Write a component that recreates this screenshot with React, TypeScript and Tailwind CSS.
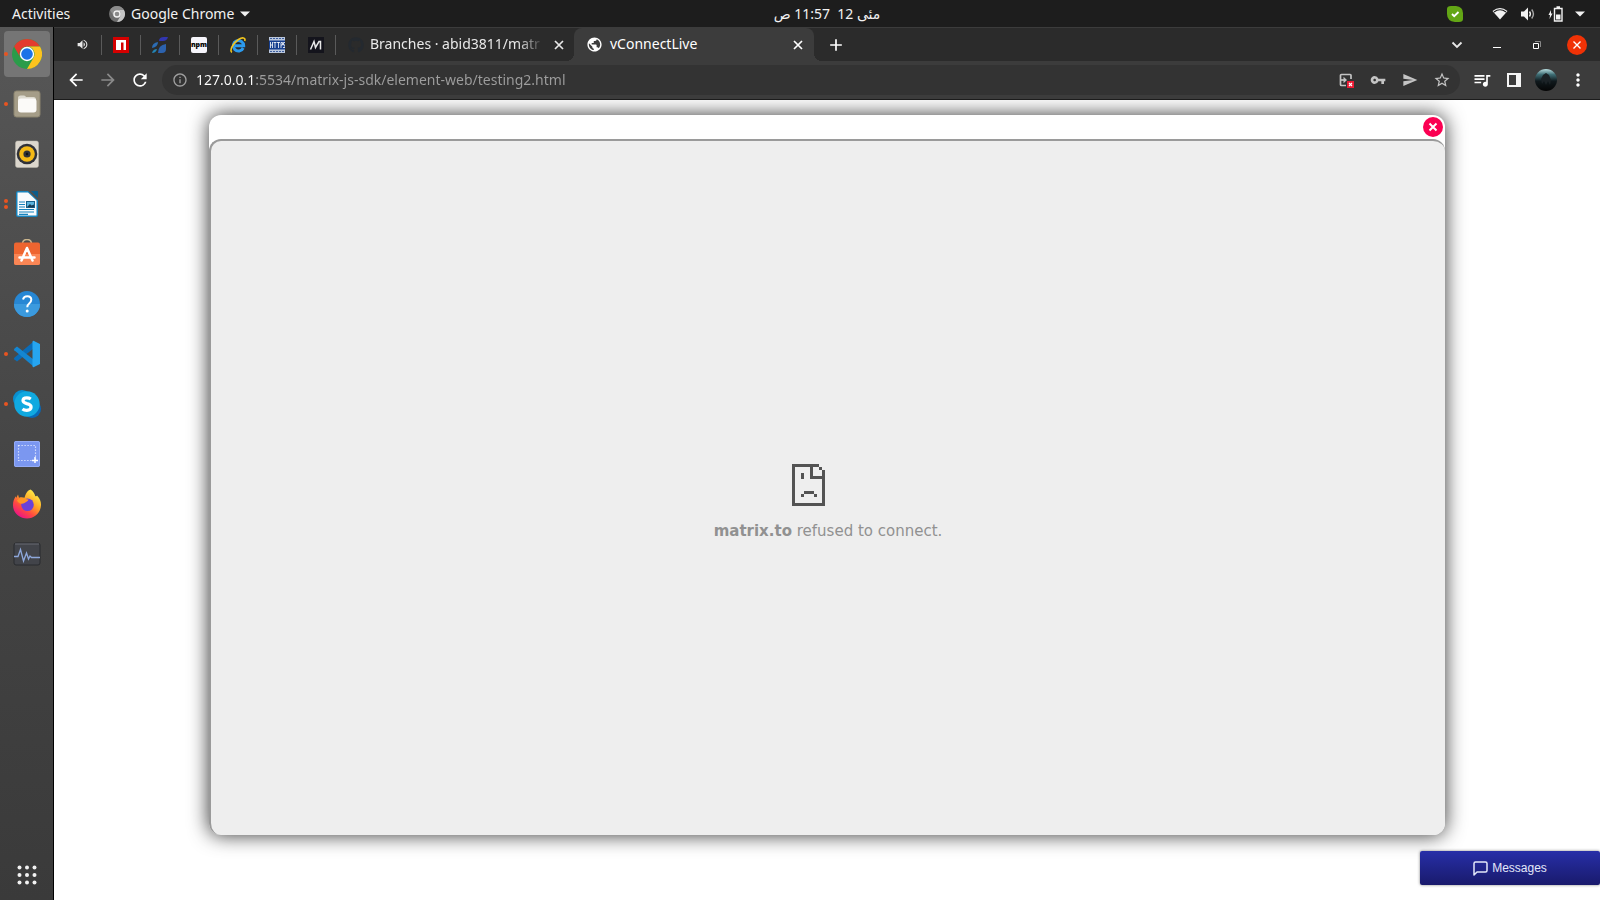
import React from 'react';
import {
  MdArrowBack,
  MdArrowForward,
  MdRefresh,
  MdInfoOutline,
  MdVpnKey,
  MdSend,
  MdStarBorder,
  MdQueueMusic,
  MdMoreVert,
  MdVolumeUp,
  MdPublic,
  MdAdd,
} from 'react-icons/md';
import { FaGithub } from 'react-icons/fa';

interface DockItem {
  name: string;
  dots: number;
  active?: boolean;
  icon: React.ReactNode;
}

const ChromeIcon: React.FC<{ size: number; mono?: boolean }> = ({ size, mono }) => {
  const [red, yellow, green, ring, core] = mono
    ? ['#8c8c8c', '#c4c4c4', '#6e6e6e', '#f2f2f2', '#8a8a8a']
    : ['#e33b2e', '#fcc31e', '#2a9c4a', '#ffffff', '#1a73e8'];
  return (
    <svg width={size} height={size} viewBox="0 0 48 48">
      <circle cx="24" cy="24" r="24" fill={green} />
      <path d="M24 0A24 24 0 0 1 44.8 12H24A12 12 0 0 0 13.6 30L3.2 12A24 24 0 0 1 24 0z" fill={red} />
      <path d="M44.8 12A24 24 0 0 1 24 48L34.4 30A12 12 0 0 0 24 12z" fill={yellow} />
      <circle cx="24" cy="24" r="11.5" fill={ring} />
      <circle cx="24" cy="24" r={mono ? 7 : 9.3} fill={core} />
    </svg>
  );
};

const FilesIcon = () => (
  <svg width="28" height="28" viewBox="0 0 28 28">
    <rect x="1" y="1" width="26" height="26" rx="2.5" fill="#a59d88" stroke="#8b846f" />
    <path d="M5 8q0-2.500 2.500-2.500h3.500q1.500 0 2 1.500h7.500q2.500 0 2.500 2.500v9q0 3-3 3H8q-3 0-3-3z" fill="#dedbd0" />
    <rect x="5" y="8.500" width="18.500" height="14" rx="3" fill="#fbfaf8" />
  </svg>
);

const RhythmboxIcon = () => (
  <svg width="28" height="28" viewBox="0 0 28 28">
    <rect x="2.500" y="1" width="23" height="26.500" rx="2" fill="#dcd7cd" stroke="#bdb8ad" strokeWidth=".5" />
    <circle cx="14" cy="14" r="10.300" fill="#2f3138" />
    <circle cx="14" cy="14" r="7.800" fill="#f4b916" />
    <circle cx="14" cy="14" r="3.600" fill="#2f3138" />
    <circle cx="14" cy="14" r="1.200" fill="#111" />
  </svg>
);

const WriterIcon = () => (
  <svg width="28" height="28" viewBox="0 0 28 28">
    <path d="M3 3q0-2 2-2h10l10 9.500V25q0 2-2 2H5q-2 0-2-2z" fill="#1683bd" />
    <path d="M18 1h7v7z" fill="#0c5d8b" />
    <path d="M4.500 2.500H15l8.500 8V25.500h-19z" fill="#f8fbfd" />
    <path d="M6 12h6M6 14.500h6M6 17h6M6 19.500h15M6 22h15M6 24.300h9" stroke="#1683bd" strokeWidth="1.200" />
    <rect x="13.500" y="11.500" width="8" height="6" fill="#5bb3dd" stroke="#17618a" />
    <path d="M14 17l3-3 1.500 1.500 2.500-1v3z" fill="#183b52" />
  </svg>
);

const SoftwareIcon = () => (
  <svg width="28" height="30" viewBox="0 1 28 30">
    <path d="M9.500 6q0-4.500 4.500-4.500T18.500 6" fill="none" stroke="#cbb58d" strokeWidth="1.500" />
    <rect x="1" y="4.500" width="26" height="22.500" rx="2" fill="#ee6530" />
    <path d="M1 16h26v9q0 2-2 2H3q-2 0-2-2z" fill="#fa8655" />
    <path d="M8.500 22.500L14 10l5.500 12.500M6.500 19.500h15" fill="none" stroke="#fff" strokeWidth="2.500" strokeLinecap="round" strokeLinejoin="round" />
  </svg>
);

const HelpIcon = () => (
  <svg width="28" height="28" viewBox="0 0 28 28">
    <circle cx="14" cy="14" r="13" fill="#2787d4" />
    <path d="M1 14h26A13 13 0 0 1 1 14z" fill="#3b9ade" />
    <path d="M10 9.500q.8-3.200 4.300-3.200 4 0 4 3.500 0 2-2.100 3.700-1.900 1.500-1.900 3.700" fill="none" stroke="#fff" strokeWidth="2" />
    <circle cx="14.200" cy="21" r="1.500" fill="#fff" />
  </svg>
);

const CodeIcon = () => (
  <svg width="28" height="28" viewBox="0 0 28 28">
    <path d="M20.500 1.500v7L4 21.500 1.300 19.200q-.6-.7 0-1.400z" fill="#0a6cb8" />
    <path d="M20.500 26.500v-7L4 6.500 1.300 8.800q-.6.700 0 1.400z" fill="#1486d2" />
    <path d="M20.500.8L27 4v20l-6.500 3.200q-1 0-1-1.200V2q0-1.200 1-1.200z" fill="#26a5f0" />
  </svg>
);

const SkypeIcon = () => (
  <svg width="30" height="30" viewBox="0 0 30 30">
    <circle cx="10" cy="10" r="9" fill="#0a8fd0" />
    <circle cx="20" cy="20" r="9" fill="#0869b8" />
    <circle cx="15" cy="15" r="12.700" fill="#10a9e0" />
    <path d="M18.800 10q-1.800-1.200-4-1.200-3.800 0-3.800 2.800 0 2 3.800 3 4.300 1 4.300 3.500 0 3.200-4.300 3.200-2.600 0-4.300-1.400" fill="none" stroke="#fff" strokeWidth="3.200" />
  </svg>
);

const ScreenshotIcon = () => (
  <svg width="28" height="28" viewBox="0 0 28 28">
    <rect x="1" y="1" width="26" height="26" rx="2" fill="#7b97f0" />
    <rect x="1.500" y="1.500" width="25" height="25" rx="1.500" fill="none" stroke="#94abf7" />
    <rect x="5.500" y="5.500" width="17" height="15" fill="none" stroke="#e6ecff" strokeWidth="1.200" strokeDasharray="1.200 1.800" />
    <path d="M22 17v6M19 20.500h6" stroke="#fff" strokeWidth="1.500" />
  </svg>
);

const FirefoxIcon = () => (
  <svg width="30" height="31" viewBox="0 0 30 31">
    <defs>
      <linearGradient id="ff" x1="0.850" y1="0.100" x2="0.250" y2="0.950">
        <stop offset="0" stopColor="#fff14a" />
        <stop offset=".4" stopColor="#ffa424" />
        <stop offset=".7" stopColor="#ff4a40" />
        <stop offset="1" stopColor="#ec1585" />
      </linearGradient>
    </defs>
    <path
      d="M18.500.500c2.500 1.500 4.300 4 4.700 6.500 1 .5 1.500.3 1.800-.5 3 3 4.200 6.500 4 9.800C28.500 23.800 22.600 29.500 15 29.500S1 23.600 1 16.300c0-3.800 1-6.500 2.800-9l.4 1.800L6 5.500l1 3.200c2-.6 4-.4 5.500.1C14 4 15.500 1.500 18.500.500z"
      fill="url(#ff)"
    />
    <circle cx="15.500" cy="15.800" r="6.300" fill="#6a42d8" />
    <path d="M5 11.500c2.500-3 6-3.300 8.500-1.500l3 .6c-.5 2-2.500 2.400-4 3.400-2.500 1.500-6.500.5-7.500-2.500z" fill="#ff9626" />
  </svg>
);

const MonitorIcon = () => (
  <svg width="28" height="24" viewBox="0 0 28 24">
    <rect x="1" y="1" width="26" height="22" rx="2" fill="#42444a" stroke="#282a2e" />
    <path d="M2 2h24" stroke="#686b72" />
    <path d="M1 14.500h4l2.500-7 3 11.500 3-8 2 6 1.500-3 1.500 1.500H27" fill="none" stroke="#8ea8dc" strokeWidth="1.300" />
  </svg>
);

const dockItems: DockItem[] = [
  { name: 'Google Chrome', dots: 1, active: true, icon: <ChromeIcon size={30} /> },
  { name: 'Files', dots: 1, icon: <FilesIcon /> },
  { name: 'Rhythmbox', dots: 0, icon: <RhythmboxIcon /> },
  { name: 'LibreOffice Writer', dots: 2, icon: <WriterIcon /> },
  { name: 'Ubuntu Software', dots: 0, icon: <SoftwareIcon /> },
  { name: 'Help', dots: 0, icon: <HelpIcon /> },
  { name: 'Visual Studio Code', dots: 1, icon: <CodeIcon /> },
  { name: 'Skype', dots: 1, icon: <SkypeIcon /> },
  { name: 'Screenshot', dots: 0, icon: <ScreenshotIcon /> },
  { name: 'Firefox', dots: 0, icon: <FirefoxIcon /> },
  { name: 'System Monitor', dots: 0, icon: <MonitorIcon /> },
];

const NpmRedIcon = () => (
  <svg width="16" height="16" viewBox="0 0 16 16">
    <path d="M0 0h16v16H0z" fill="#d50000" />
    <path d="M3 3h10v10h-2.500V5.500H8V13H3z" fill="#fff" />
  </svg>
);

const BladesIcon = () => (
  <svg width="16" height="16" viewBox="0 0 16 16">
    <path d="M7 4q0-4 5-4h4q-1 4-5 4z" fill="#3236b0" />
    <path d="M0 11q0-5 6-6 0 5-6 6z" fill="#2c6cb4" />
    <path d="M0 16q1-4 5-4-1 4-5 4z" fill="#2384b4" />
    <path d="M6 16q0-8 8-9v5q0 4-4 4z" fill="#2c62ae" />
  </svg>
);

const NpmIcon = () => (
  <span className="flex size-4 items-center justify-center rounded-xs bg-[#f6f5fb] text-[7px] leading-none font-black text-black">
    npm
  </span>
);

const ExplorerIcon = () => (
  <svg width="16" height="16" viewBox="0 0 16 16">
    <path d="M13.200 11A5.200 5.200 0 1 1 13.700 8.700H5" fill="none" stroke="#2c9bee" strokeWidth="3" />
    <path d="M2 15.300C-1 14 3 6 8.500 2.500 12 .2 16 .200 14.700 4" fill="none" stroke="#f2c51d" strokeWidth="1.600" />
  </svg>
);

const HttpsIcon = () => (
  <svg width="16" height="16" viewBox="0 0 16 16">
    <path d="M0 0h16v16H0z" fill="#b9c6dc" />
    <path d="M0 3.500h16v9H0z" fill="#173f8f" />
    <path d="M1 1.500h14M1 14.500h14" stroke="#3d5f9f" strokeDasharray="2 1" />
    <path d="M1.500 5v6M3.500 5v6M1.500 8h2M4.500 5.500h3M6 5v6M8 5.500h3M9.500 5v6M12 11V5.500h1.500V8H12M16 5.500h-1.500V8H16v2.500h-2" fill="none" stroke="#fff" strokeWidth=".8" />
  </svg>
);

const MIcon = () => (
  <svg width="16" height="16" viewBox="0 0 16 16">
    <path d="M0 0h16v16H0z" fill="#14141c" />
    <path d="M2.500 12.500L6 4.500l1.500 6 3.500-6 1.500 0v8" fill="none" stroke="#e8e8e8" strokeWidth="1.500" />
  </svg>
);

const pinnedTabs = [
  { name: 'npm', icon: <NpmRedIcon /> },
  { name: 'Blades', icon: <BladesIcon /> },
  { name: 'npm package', icon: <NpmIcon /> },
  { name: 'Explorer', icon: <ExplorerIcon /> },
  { name: 'HTTPS', icon: <HttpsIcon /> },
  { name: 'Medium', icon: <MIcon /> },
];

const Caret = () => (
  <svg width="10" height="6" viewBox="0 0 10 6">
    <path d="M0 .500h10L5 5.500z" fill="#f2f2f2" />
  </svg>
);

const CloseGlyph = () => (
  <svg width="14" height="14" viewBox="0 0 14 14">
    <path d="M3 3l8 8M11 3l-8 8" stroke="currentColor" strokeWidth="1.700" />
  </svg>
);

const TopBar = () => (
  <header className="grid h-[27px] shrink-0 grid-cols-[1fr_auto_1fr] items-center bg-[#1d1d1d] font-['Noto_Sans',sans-serif] text-[14px] leading-5 text-[#f2f2f2]">
    <div className="flex items-center pl-3">
      <button className="w-[97px] text-left">Activities</button>
      <button className="flex items-center gap-1.5">
        <ChromeIcon size={16} mono />
        <span>Google Chrome</span>
        <Caret />
      </button>
    </div>
    <button dir="rtl" className="ml-[54px] font-['Noto_Sans','DejaVu_Sans',sans-serif] whitespace-pre">
      {'مئی 12  11:57 ص'}
    </button>
    <div className="flex items-center justify-end pr-[15px]">
      <svg className="mr-[29px]" width="16" height="16" viewBox="0 0 16 16">
        <path d="M0 3q0-3 4-3h5q7 1 7 7v6q0 3-4 3H8Q0 15 0 8z" fill="#63a615" />
        <path d="M5 8l2.200 2.200L11.500 6" fill="none" stroke="#fff" strokeWidth="1.800" />
      </svg>
      <svg className="mr-3" width="16" height="13" viewBox="0 0 16 13">
        <path d="M.5 4Q8-2 15.500 4L8 12.500z" fill="#f2f2f2" />
        <path d="M2 5Q8 .5 14 5" fill="none" stroke="#1d1d1d" strokeWidth="1.200" />
      </svg>
      <svg className="mr-3" width="16" height="14" viewBox="0 0 16 14">
        <path d="M1 4.500h3L8 .500v13L4 9.500H1z" fill="#f2f2f2" />
        <path d="M9.500 4.500q1.800 2.500 0 5" fill="none" stroke="#f2f2f2" strokeWidth="1.400" />
        <path d="M11.700 2.500q3.500 4.500 0 9" fill="none" stroke="#a8a8a8" strokeWidth="1.400" />
      </svg>
      <svg className="mr-3" width="15" height="16" viewBox="0 0 15 16">
        <path d="M3 4L.500 9H2l-.5 4L4.500 7.500H3z" fill="#f2f2f2" />
        <path d="M6.500 2.500h7.500v12.500H6.500zM8.500 1h3.500" fill="none" stroke="#f2f2f2" strokeWidth="1.400" />
        <path d="M8 8.500h4.500v5H8z" fill="#f2f2f2" />
      </svg>
      <Caret />
    </div>
  </header>
);

const Dock = () => (
  <nav className="flex w-[54px] shrink-0 flex-col gap-1 border-r border-black bg-linear-to-b from-[#575757] via-[#454545] to-[#3a3a3a] px-1 pt-1 pb-0.5">
    {dockItems.map(item => (
      <button
        key={item.name}
        aria-label={item.name}
        className={`relative flex h-[46px] w-[46px] items-center justify-center rounded-sm ${item.active ? 'bg-[#757575]' : ''}`}
      >
        {item.icon}
        <span className="absolute left-0 flex flex-col gap-0.5">
          {Array.from({ length: item.dots }, (_, i) => (
            <span key={i} className="size-1 rounded-full bg-[#e95420]" />
          ))}
        </span>
      </button>
    ))}
    <button aria-label="Show applications" className="mt-auto flex h-[46px] w-[46px] items-center justify-center">
      <svg width="20" height="20" viewBox="0 0 20 20" fill="#f2f2f2">
        {[2.5, 10, 17.5].map(y => [2.5, 10, 17.5].map(x => <circle key={`${x}-${y}`} cx={x} cy={y} r="2" />))}
      </svg>
    </button>
  </nav>
);

const TabStrip = () => (
  <div className="flex h-[34px] shrink-0 items-center border-t border-[#3c3c3c] bg-[#2b2b2b] font-['Noto_Sans',sans-serif] text-[14px] leading-5 text-[#e8e8e8]">
    <button aria-label="Muted tab" className="flex w-[47px] justify-end pr-3">
      <MdVolumeUp size={13} />
    </button>
    {pinnedTabs.map(tab => (
      <button key={tab.name} aria-label={tab.name} className="flex h-5 w-[39px] items-center justify-center border-l border-[#5a5a5a]">
        {tab.icon}
      </button>
    ))}
    <div className="flex h-5 w-[239px] items-center border-l border-[#5a5a5a] pl-3">
      <FaGithub size={16} className="shrink-0 text-[#24292f]" />
      <button className="ml-1.5 flex-1 mask-r-from-85% pb-0.5 text-left whitespace-nowrap">Branches · abid3811/matr</button>
      <button aria-label="Close tab" className="mr-2 ml-2">
        <CloseGlyph />
      </button>
    </div>
    <div className="relative flex h-full w-[240px] items-center rounded-t-lg bg-[#3c3c3c] px-[9px] text-white before:absolute before:bottom-0 before:-left-2 before:size-2 before:bg-[radial-gradient(circle_at_0_0,#2b2b2b_8px,#3c3c3c_8px)] after:absolute after:-right-2 after:bottom-0 after:size-2 after:bg-[radial-gradient(circle_at_100%_0,#2b2b2b_8px,#3c3c3c_8px)]">
      <MdPublic size={17} className="ml-[3px] shrink-0" />
      <button className="ml-[7px] flex-1 pb-0.5 text-left">vConnectLive</button>
      <button aria-label="Close tab">
        <CloseGlyph />
      </button>
    </div>
    <button aria-label="New tab" className="ml-3 text-white">
      <MdAdd size={20} />
    </button>
    <div className="ml-auto flex items-center gap-5 pr-[13px]">
      <button aria-label="Search tabs" className="flex size-5 items-center justify-center">
        <svg width="12" height="8" viewBox="0 0 12 8">
          <path d="M1.500 1.500L6 6l4.500-4.500" fill="none" stroke="#e8e8e8" strokeWidth="1.800" />
        </svg>
      </button>
      <button aria-label="Minimize" className="flex size-5 items-center justify-center">
        <svg width="8" height="8" viewBox="0 0 8 8">
          <path d="M0 6h8v1H0z" fill="#fff" />
        </svg>
      </button>
      <button aria-label="Restore" className="flex size-5 items-center justify-center">
        <svg width="8" height="8" viewBox="0 0 8 8">
          <path d="M2 .500h5.500V6" fill="none" stroke="#888" />
          <path d="M.5 2.500h5v5h-5z" fill="none" stroke="#fff" />
        </svg>
      </button>
      <button aria-label="Close window" className="flex size-5 items-center justify-center rounded-full bg-[#f03206]">
        <svg width="8" height="8" viewBox="0 0 8 8">
          <path d="M.5.500l7 7M7.500.500l-7 7" stroke="#fff" strokeWidth="1.400" />
        </svg>
      </button>
    </div>
  </div>
);

const Toolbar = () => (
  <div className="flex h-[39px] shrink-0 items-center border-b border-[#1c1c1c] bg-[#3c3c3c] pr-1.5 pl-3 text-white">
    <div className="flex gap-3">
      <button aria-label="Back">
        <MdArrowBack size={20} />
      </button>
      <button aria-label="Forward" className="text-[#8a8a8a]">
        <MdArrowForward size={20} />
      </button>
      <button aria-label="Reload">
        <MdRefresh size={20} />
      </button>
    </div>
    <div className="ml-3 flex h-[30px] flex-1 items-center rounded-full bg-[#333333] pr-0.5 pl-2.5 text-[#c4c4c4]">
      <MdInfoOutline size={16} className="shrink-0 text-[#a0a0a0]" />
      <input
        aria-label="Address"
        type="text"
        defaultValue="127.0.0.1:5534/matrix-js-sdk/element-web/testing2.html"
        className="ml-2 min-w-0 flex-1 bg-[linear-gradient(to_right,#fff_60px,#9e9e9e_60px)] bg-clip-text font-['Noto_Sans',sans-serif] text-[14px] leading-5 text-transparent outline-none"
      />
      <div className="flex items-center">
        <button aria-label="Sign-in blocked" className="flex w-8 justify-center">
          <svg width="16" height="16" viewBox="0 0 16 16">
            <path d="M13 7V3.500q0-1-1-1H3.500q-1 0-1 1v9q0 1 1 1H8" fill="none" stroke="#c4c4c4" strokeWidth="1.700" />
            <path d="M2.500 8H6" stroke="#c4c4c4" strokeWidth="1.700" />
            <path d="M5.500 4.800L9 8l-3.500 3.200z" fill="#c4c4c4" />
            <path d="M9 9h7v7H9z" fill="#ec1c35" />
            <path d="M11 11l3 3M14 11l-3 3" stroke="#fff" strokeWidth="1.100" />
          </svg>
        </button>
        <button aria-label="Passwords" className="flex w-8 justify-center">
          <MdVpnKey size={16} />
        </button>
        <button aria-label="Share" className="flex w-8 justify-center">
          <MdSend size={16} />
        </button>
        <button aria-label="Bookmark" className="flex w-8 justify-center">
          <MdStarBorder size={18} />
        </button>
      </div>
    </div>
    <div className="ml-1.5 flex items-center">
      <button aria-label="Media" className="flex w-8 justify-center">
        <MdQueueMusic size={20} />
      </button>
      <button aria-label="Side panel" className="flex w-8 justify-center">
        <svg width="14" height="14" viewBox="0 0 14 14">
          <path d="M0 0h14v14H0zM2 2v10h7V2z" fill="#f5f5f5" fillRule="evenodd" />
        </svg>
      </button>
      <button aria-label="Profile" className="flex w-8 justify-center">
        <svg width="22" height="22" viewBox="0 0 22 22">
          <defs>
            <linearGradient id="av" x1="0" y1="0" x2="0" y2="1">
              <stop offset="0" stopColor="#b9dfe2" />
              <stop offset=".25" stopColor="#3f6e75" />
              <stop offset=".55" stopColor="#10191d" />
              <stop offset="1" stopColor="#050505" />
            </linearGradient>
          </defs>
          <circle cx="11" cy="11" r="11" fill="url(#av)" />
          <path d="M6 10l2-4 3-2 3 2 2 5-1 5-2-4-2 4-2-4-2 3z" fill="#1b2226" />
        </svg>
      </button>
      <button aria-label="Menu" className="flex w-8 justify-center">
        <MdMoreVert size={20} />
      </button>
    </div>
  </div>
);

const SadPageIcon = () => (
  <svg width="72" height="42" viewBox="0 0 72 42" fill="#535353" shapeRendering="crispEdges">
    <path d="M0 0h27v3H21v9h9V6h3v36H0zM3 3v36h27V15H18V3z" fillRule="evenodd" />
    <path d="M27 3h3v3h-3zM9 9h3v6H9zM12 27h10v3H12zM9 30h3v3H9zM22 30h3v3h-3z" />
  </svg>
);

const PageContent = () => (
  <main className="relative flex flex-1 flex-col overflow-hidden bg-white">
    <section className="mx-auto mt-[15px] flex h-9/10 w-4/5 flex-col rounded-xl bg-white shadow-[0_0_20px_#000000cc]">
      <div className="flex h-6 shrink-0 items-center justify-end pr-0.5">
        <button aria-label="Close" className="flex size-5 items-center justify-center rounded-full bg-[#fb0052]">
          <svg width="10" height="10" viewBox="0 0 10 10">
            <path d="M1.500 1.500l7 7M8.500 1.500l-7 7" stroke="#fff" strokeWidth="2" />
          </svg>
        </button>
      </div>
      <div className="flex flex-1 flex-col items-center justify-center gap-[15px] rounded-xl border-t-2 border-l-2 border-[#9a9a9a] bg-[#eeeeee] pt-7">
        <SadPageIcon />
        <p className="font-['DejaVu_Sans',sans-serif] text-[15px] leading-5 text-[#919191]">
          <strong>matrix.to</strong> refused to connect.
        </p>
      </div>
    </section>
    <button className="absolute right-0 bottom-[15px] flex h-[34px] w-[180px] items-center justify-center gap-1 rounded-xs bg-linear-to-b from-[#272fa8] to-[#191a6c] font-['Liberation_Sans',sans-serif] text-[12px] leading-4 text-[#e4e8fa] shadow-[0_0_3px_#00000080]">
      <svg width="15" height="15" viewBox="0 0 15 15">
        <path d="M1 14V2.500Q1 1 2.500 1h10Q14 1 14 2.500v7q0 1.500-1.500 1.500H4z" fill="none" stroke="#e4e8fa" strokeWidth="1.500" strokeLinejoin="round" />
      </svg>
      Messages
    </button>
  </main>
);

export default function App() {
  return (
    <div className="flex h-screen flex-col overflow-hidden">
      <TopBar />
      <div className="flex min-h-0 flex-1">
        <Dock />
        <div className="flex min-w-0 flex-1 flex-col">
          <TabStrip />
          <Toolbar />
          <PageContent />
        </div>
      </div>
    </div>
  );
}
